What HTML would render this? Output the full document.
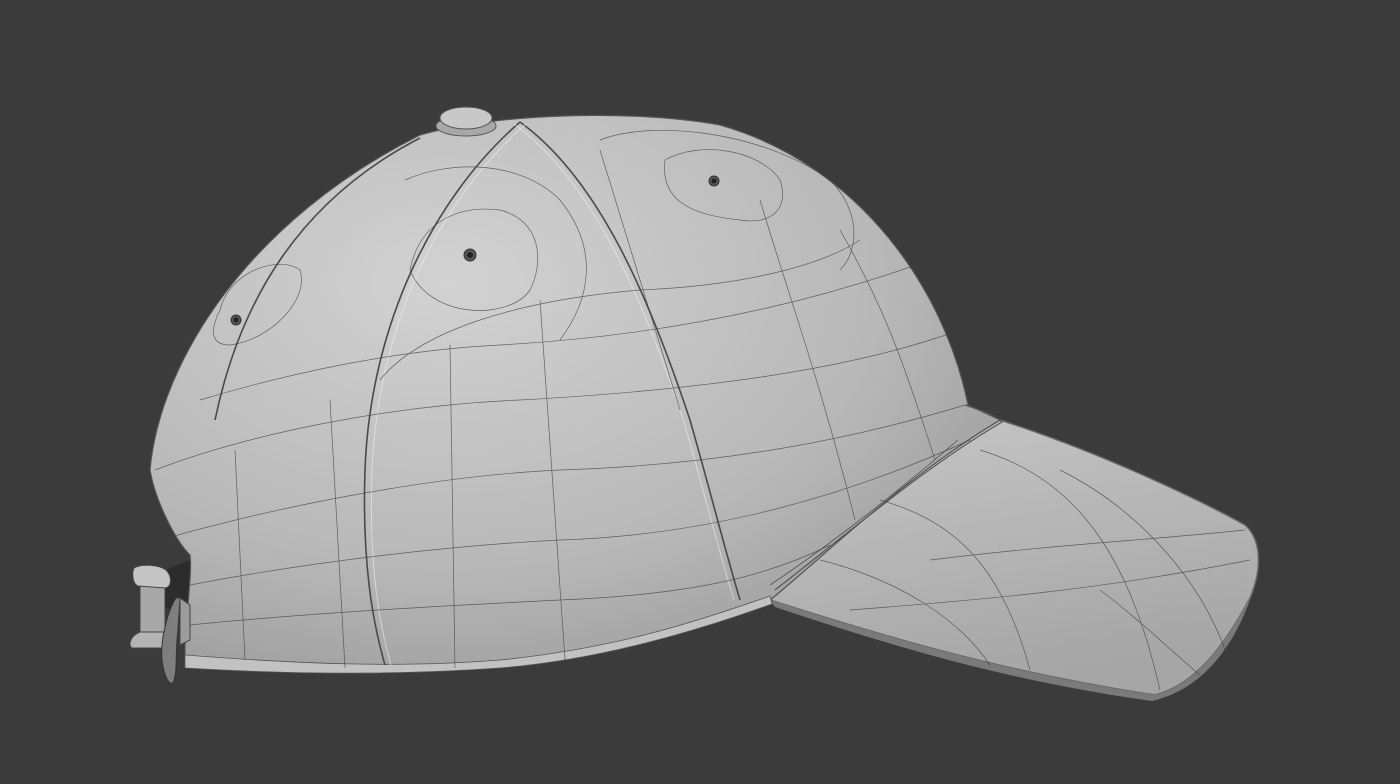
<!DOCTYPE html>
<html><head><style>html,body{margin:0;padding:0;background:#3b3b3b;width:1400px;height:784px;overflow:hidden}</style></head>
<body>
<svg width="1400" height="784" viewBox="0 0 1400 784" xmlns="http://www.w3.org/2000/svg">
<defs>
<radialGradient id="rg" cx="0.35" cy="0.3" r="0.85">
<stop offset="0" stop-color="#d2d2d2"/><stop offset="0.6" stop-color="#b8b8b8"/><stop offset="1" stop-color="#959595"/>
</radialGradient>
<linearGradient id="bg" x1="0" y1="0" x2="0.3" y2="1">
<stop offset="0" stop-color="#c6c6c6"/><stop offset="1" stop-color="#a6a6a6"/>
</linearGradient>
</defs>
<path d="M160,575 C175,562 200,558 200,560 L195,610 C180,612 170,610 160,605Z" fill="#2c2c2c"/>
<path d="M1000,420 C1100,452 1200,500 1245,525 C1262,540 1262,570 1250,598 C1225,645 1195,685 1155,695 C1000,672 870,632 770,600 C830,550 900,480 1000,420 Z" fill="url(#bg)" stroke="#666" stroke-width="1.5"/>
<path d="M1250,598 C1225,645 1195,685 1155,695 C1000,672 870,632 770,600 L775,607 C880,642 1000,680 1152,701 C1200,690 1235,650 1255,585Z" fill="#7a7a7a"/>
<path d="M185,660 L185,640 C188,600 192,570 190,555 C175,540 155,500 150,470 C160,360 250,220 420,135 C500,112 640,110 720,125 C860,165 945,290 968,405 L1000,420 C900,480 820,560 770,600 C650,650 500,672 400,672 C300,672 230,670 185,660 Z" fill="url(#rg)" stroke="#555" stroke-width="1.2"/>
<path d="M185,655 C300,664 400,668 500,660 C620,648 700,620 770,596 L772,604 C700,630 600,660 500,668 C400,675 300,675 185,668Z" fill="#c2c2c2" stroke="#555" stroke-width="0.8"/>
<path d="M965,405 C980,410 995,415 1002,422 C920,470 840,540 775,590" fill="none" stroke="#555" stroke-width="1.2"/>
<path d="M958,440 C900,490 830,545 770,585" fill="none" stroke="#555" stroke-width="0.8"/>
<g fill="none" stroke="#4a4a4a" stroke-width="1.6">
<path d="M520,122 C430,200 370,330 365,470 C362,560 372,620 385,665"/>
<path d="M520,122 C600,180 650,300 690,420 C710,490 725,550 740,600"/>
<path d="M420,138 C300,200 240,300 215,420"/>
</g>
<g fill="none" stroke="#eee" stroke-width="1" opacity="0.6">
<path d="M526,124 C436,202 377,332 372,472 C369,562 378,620 391,665"/>
<path d="M514,124 C594,182 644,302 684,422 C704,492 719,552 734,600"/>
</g>
<g fill="none" stroke="#3f3f3f" stroke-width="0.7" opacity="0.75">
<path d="M155,470 C260,430 400,405 520,400 C700,390 850,370 960,330"/>
<path d="M160,540 C300,500 450,475 560,470 C720,465 850,440 965,405"/>
<path d="M190,585 C320,560 460,545 560,540 C720,535 860,490 970,440"/>
<path d="M190,625 C320,612 460,605 560,600 C680,595 760,580 830,545"/>
<path d="M200,400 C300,370 400,350 500,345 C680,335 820,300 930,260"/>
<path d="M380,380 C420,330 520,300 640,290 C760,285 830,260 860,240"/>
<path d="M410,270 C420,220 460,205 500,210 C540,220 545,260 530,290 C510,320 430,320 410,270Z"/>
<path d="M405,180 C450,160 520,160 560,200 C600,250 590,300 560,340"/>
<path d="M665,160 C700,140 760,150 780,180 C790,210 770,225 740,220 C690,215 660,200 665,160Z"/>
<path d="M600,140 C650,120 760,130 830,180 C860,210 860,250 840,270"/>
<path d="M220,310 C230,270 280,255 300,270 C310,300 270,340 230,345 C210,345 210,330 220,310Z"/>
<path d="M235,450 L245,660"/><path d="M330,400 L345,668"/><path d="M450,345 L455,668"/>
<path d="M540,300 L565,660"/><path d="M600,150 L680,410"/>
<path d="M760,200 C790,300 820,380 855,520"/><path d="M840,230 C880,300 900,350 935,460"/>
<path d="M980,450 C1080,480 1130,560 1160,690"/><path d="M1060,470 C1140,510 1200,580 1225,650"/>
<path d="M880,500 C950,520 1000,560 1030,670"/><path d="M820,560 C900,580 960,620 990,665"/>
<path d="M850,610 C980,600 1100,590 1250,560"/><path d="M930,560 C1050,545 1150,540 1245,530"/>
<path d="M1100,590 C1140,620 1170,650 1200,675"/>
</g>
<g fill="#555" stroke="#333"><circle cx="470" cy="255" r="6"/><circle cx="714" cy="181" r="5"/><circle cx="236" cy="320" r="5"/></g>
<g fill="#222"><circle cx="470" cy="255" r="3"/><circle cx="714" cy="181" r="2.5"/><circle cx="236" cy="320" r="2.5"/></g>
<ellipse cx="466" cy="126" rx="30" ry="10" fill="#a8a8a8" stroke="#555"/>
<ellipse cx="466" cy="118" rx="26" ry="11" fill="#c8c8c8" stroke="#555"/>
<!-- buckle -->
<path d="M140,585 L165,585 L165,635 L140,635Z" fill="#a8a8a8" stroke="#444"/>
<path d="M134,568 C140,564 158,564 166,570 C172,576 172,586 166,588 L138,586 C132,584 132,572 134,568Z" fill="#c4c4c4" stroke="#444"/>
<path d="M140,632 L165,632 L165,648 L132,648 C128,645 130,636 140,632Z" fill="#b4b4b4" stroke="#444"/>
<path d="M176,598 C168,610 160,640 162,660 C164,675 168,685 173,683 C178,672 175,650 178,630 L180,598Z" fill="#7e7e7e" stroke="#333"/>
<path d="M180,598 L190,605 L190,640 L180,645Z" fill="#9c9c9c" stroke="#444"/>
</svg>
</body></html>
